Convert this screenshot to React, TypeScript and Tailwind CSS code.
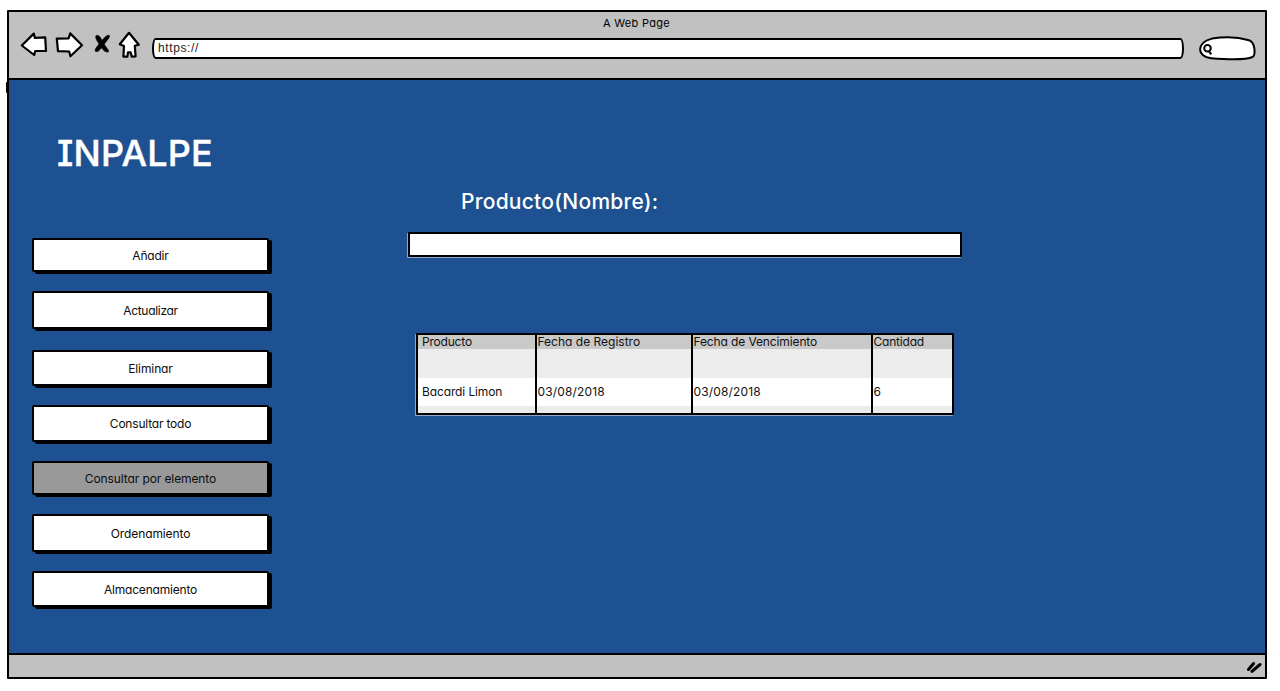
import React from "react";

const menu = [
  { label: "Añadir", box: "mt-0 h-[34px]", text: "tracking-[-0.2px]" },
  { label: "Actualizar", box: "mt-[19px] h-[38px]", text: "tracking-[-0.3px]" },
  { label: "Eliminar", box: "mt-[21px] h-[36px]", text: "tracking-[-0.1px]" },
  { label: "Consultar todo", box: "mt-[19px] h-[37px]", text: "tracking-[-0.2px]" },
  { label: "Consultar por elemento", box: "mt-[19px] h-[34px]", text: "tracking-[-0.1px]", active: true },
  { label: "Ordenamiento", box: "mt-[19px] h-[38px]", text: "tracking-[-0.1px]" },
  { label: "Almacenamiento", box: "mt-[19px] h-[36px]", text: "tracking-[-0.2px]" },
];

const columns = [
  { title: "Producto", value: "Bacardi Limon", cell: "w-[117px] pl-[4px]", titleText: "tracking-[-0.2px]", valueText: "tracking-[-0.12px]" },
  { title: "Fecha de Registro", value: "03/08/2018", cell: "w-[156px] border-l-2 pl-[0.5px]", titleText: "tracking-[0px]", valueText: "tracking-[0.15px]" },
  { title: "Fecha de Vencimiento", value: "03/08/2018", cell: "w-[180px] border-l-2 pl-[0.5px]", titleText: "tracking-[-0.12px]", valueText: "tracking-[0.15px]" },
  { title: "Cantidad", value: "6", cell: "w-[82px] border-l-2 pl-[0.5px]", titleText: "tracking-[-0.2px]", valueText: "tracking-[0px]" },
];

function NavIcons() {
  return (
    <svg width="124" height="30" viewBox="18 31 124 30" fill="#fff" stroke="#000" strokeWidth="2.2" strokeLinejoin="round" className="shrink-0">
      <path d="M21.8 45.500 33.8 33.600 34.800 37.800 45.2 37.400 46 51 35.2 51 34.2 55Z" />
      <path d="M56.8 38.700 68.6 38.500 70.2 33.400 82 45.200 70.4 56.300 69.2 51.500 58 51.2Z" />
      <path d="M129 32.8 119.8 44.300 124 46 123.4 56.600 127.4 56.600 128 52.4 130.6 52.4 131.8 56.600 135.600 56.400 134.8 45.8 138.8 44.8Z" />
      <g fill="#000" strokeWidth="0.800">
        <path d="M96.200 35.600C98.800 34.600 100.600 37.400 102 40.600C104.200 37.600 107.400 34.600 109.200 35.400C110.400 36.800 106.800 40.400 104.200 44.200C105.600 47 109 50 108.600 51.600C106.400 53 103.600 50.600 101.600 47.800C99.400 50.400 97.400 52.200 95.600 51.400C94.200 50 96.800 46.800 99.200 44C97.200 41 94.800 37.600 96.200 35.600Z" />
      </g>
    </svg>
  );
}

function SearchPill() {
  return (
    <svg width="60" height="28" viewBox="1197 34 60 28" fill="none" stroke="#000" strokeWidth="2" className="shrink-0">
      <path fill="#fff" d="M1212 38.6C1224 36.8 1238 37 1249 40.2C1255.6 42.3 1255.6 55.2 1252.6 57C1245 60.4 1226 59.4 1211 58.2C1197.500 57 1195 43 1212 38.600Z" />
      <circle cx="1207.500" cy="48.200" r="3.300" />
      <path d="M1209 51.300 1211.300 54.300" />
    </svg>
  );
}

function Toolbar() {
  return (
    <header className="flex h-[68px] flex-col border-b-2 border-black bg-[#c1c1c1]">
      <div className="h-[20px] pl-[594px] pt-[2px] text-[11px] leading-[18px]">
        <span className="tracking-[0.3px]">A Web Page</span>
      </div>
      <div className="flex pl-[9px]">
        <div className="-mt-px">
          <NavIcons />
        </div>
        <div className="ml-[10px] mt-[6px] flex h-[21px] w-[1032px] items-center rounded-[4px/12px] border-2 border-black bg-white pl-[4px]">
          <span className="-mt-px font-['Liberation_Sans',sans-serif] text-[12px] leading-[16px] tracking-[0.6px] text-[#222]">https://</span>
        </div>
        <div className="ml-[13px] mt-[2px]">
          <SearchPill />
        </div>
      </div>
    </header>
  );
}

function Sidebar() {
  return (
    <nav className="ml-[23px] w-[237px] shrink-0 pt-[49px]">
      <h1 className="ml-[25px] h-[109px] text-[36px] font-medium leading-[48px] text-white [-webkit-text-stroke:0.4px_#fff] [font-feature-settings:'cv08','cv11']">
        <span className="tracking-[0.2px]">INPALPE</span>
      </h1>
      {menu.map((m) => (
        <button
          key={m.label}
          className={`${m.box} flex w-full items-center justify-center rounded-[2px] border-2 border-black shadow-[3px_2px_0_#000] ${m.active ? "bg-[#999]" : "bg-white"}`}
        >
          <span className={`${m.text} pt-px text-[12px] leading-[16px] text-[#0c0c0c]`}>{m.label}</span>
        </button>
      ))}
    </nav>
  );
}

function ProductTable() {
  return (
    <section className="ml-[8px] mt-[76px] flex h-[82px] w-[538px] rounded-[1px] border-2 border-black bg-white text-[12px] text-[#111] shadow-[-1px_1px_0_rgba(255,255,255,0.5)]">
      {columns.map((c) => (
        <div key={c.title} className={`${c.cell} flex shrink-0 flex-col border-black bg-[linear-gradient(#c9c9c9_14px,#ececec_14px,#ececec_43px,#fff_43px,#fff_71px,#ececec_71px)] last:shrink`}>
          <div className="h-[43px] leading-[14px]">
            <span className={c.titleText}>{c.title}</span>
          </div>
          <div className="leading-[28px]">
            <span className={c.valueText}>{c.value}</span>
          </div>
        </div>
      ))}
    </section>
  );
}

export default function App() {
  return (
    <div className="h-[691px] w-[1280px] overflow-hidden bg-white pl-[7px] pt-[10px] font-['Inter',sans-serif] text-black [font-feature-settings:'cv11']">
      <div className="relative flex h-[669px] w-[1260px] flex-col rounded-[1px] border-2 border-black bg-[#1e5192]">
        <div className="absolute -left-[3px] top-[70px] h-[11px] w-[2px] rounded bg-black" />
        <Toolbar />
        <div className="flex flex-1">
          <Sidebar />
          <main className="ml-[139px] w-[560px] pt-[108px]">
            <h2 className="ml-[53px] h-[28px] text-[21px] font-medium leading-[28px] text-white">
              <span className="tracking-[0.25px]">Producto(Nombre):</span>
            </h2>
            <div className="mt-[16px] h-[25px] w-[554px] rounded-[1px] border-2 border-black bg-white shadow-[-1px_1px_0_rgba(255,255,255,0.5)]" />
            <ProductTable />
          </main>
        </div>
        <footer className="flex h-[24px] items-center justify-end border-t-2 border-black bg-[#c1c1c1] pr-[3px]">
          <svg width="16" height="14" viewBox="0 0 16 14" stroke="#000" strokeWidth="3" strokeLinecap="round">
            <path d="M2.500 10.500 7.500 4.500M6 12.300 14 5.500" />
          </svg>
        </footer>
      </div>
    </div>
  );
}
